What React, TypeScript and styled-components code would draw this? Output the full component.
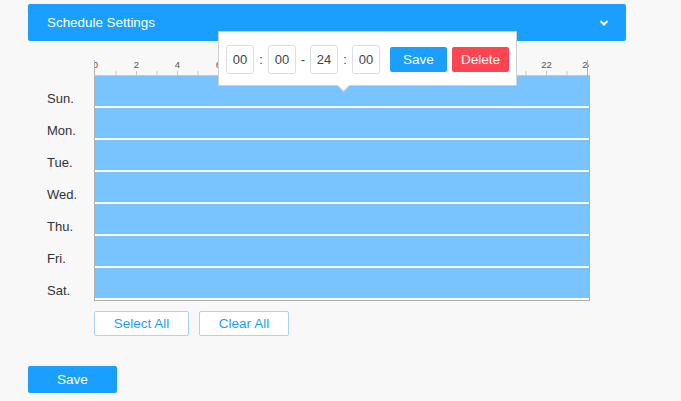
import React from "react";
import styled, { createGlobalStyle } from "styled-components";

const GlobalStyle = createGlobalStyle`
  html, body { margin: 0; padding: 0; background: #f8f8f8; }
  body { font-family: "Liberation Sans", Arial, sans-serif; }
`;

const Page = styled.div`
  position: relative;
  width: 681px;
  height: 401px;
  box-sizing: border-box;
  padding: 4px 0 0 28px;
`;

const Header = styled.div`
  width: 598px;
  height: 37px;
  box-sizing: border-box;
  background: #1a9fff;
  border-radius: 2px;
  display: flex;
  align-items: center;
  justify-content: space-between;
  padding: 0 17px 0 19px;
  color: #fff;
  font-size: 13.4px;
`;

const Timeline = styled.div`
  display: flex;
  align-items: flex-start;
`;

const LabelCol = styled.div`
  width: 66px;
  box-sizing: border-box;
  padding: 35px 0 0 19px;
  display: flex;
  flex-direction: column;
`;

const DayLabel = styled.div`
  height: 32px;
  box-sizing: border-box;
  padding-top: 14px;
  line-height: 18px;
  font-size: 13px;
  color: #333;
`;

const GridCol = styled.div`
  width: 496px;
  display: flex;
  flex-direction: column;
`;

const DayGrid = styled.div`
  display: flex;
  flex-direction: column;
  gap: 2px;
  padding-bottom: 2px;
  background: #fff;
  border: 1px solid #b0b0b0;
  border-top: none;
`;

const DayRow = styled.div`
  height: 30px;
  background: #79c3ff;
`;

const Actions = styled.div`
  display: flex;
  gap: 10px;
  margin: 10px 0 0 66px;
`;

const OutlineButton = styled.button<{ $w: number }>`
  width: ${(p) => p.$w}px;
  height: 25px;
  background: #fff;
  border: 1px solid #a6d4ff;
  border-radius: 2px;
  color: #1a9fff;
  font-family: "Liberation Sans", Arial, sans-serif;
  font-size: 13.5px;
  padding: 0;
`;

const SolidButton = styled.button<{ $w: number; $h: number; $red?: boolean }>`
  width: ${(p) => p.$w}px;
  height: ${(p) => p.$h}px;
  background: ${(p) => (p.$red ? "#ff4552" : "#1a9fff")};
  border: none;
  border-radius: 2px;
  color: #fff;
  font-family: "Liberation Sans", Arial, sans-serif;
  font-size: 13.5px;
  padding: 0;
`;

const SaveRow = styled.div`
  margin-top: 30px;
`;

const Popover = styled.div`
  position: absolute;
  left: 218px;
  top: 31px;
  width: 299px;
  height: 55px;
  box-sizing: border-box;
  background: #fff;
  border: 1px solid #d0d0d0;
  display: flex;
  align-items: center;
  padding: 1px 0 0 7px;
  font-size: 13px;
  color: #333;

  &::after {
    content: "";
    position: absolute;
    left: 120px;
    bottom: -5px;
    width: 8px;
    height: 8px;
    background: #fff;
    border-right: 1px solid #d0d0d0;
    border-bottom: 1px solid #d0d0d0;
    transform: rotate(45deg);
  }
`;

const TimeBox = styled.div`
  width: 28px;
  height: 29px;
  box-sizing: border-box;
  border: 1px solid #dcdfe6;
  border-radius: 3px;
  display: flex;
  align-items: center;
  justify-content: center;
  font-size: 13px;
  color: #444;
`;

const Sep = styled.span`
  width: 14px;
  text-align: center;
  color: #444;
`;

const PopButtons = styled.div`
  display: flex;
  gap: 5px;
  margin-left: 10px;
`;

const Chevron = () => (
  <svg width="10" height="6" viewBox="0 0 10 6">
    <polyline points="1.5,1 5,4.5 8.5,1" fill="none" stroke="#fff" strokeWidth="2" />
  </svg>
);

const Ruler = () => {
  const step = 20.5;
  const x0 = 1;
  const ticks = Array.from({ length: 25 }, (_, i) => i);
  return (
    <svg width="496" height="35" viewBox="0 0 496 35" style={{ display: "block" }}>
      <defs>
        <clipPath id="rc">
          <rect x="1" y="0" width="494" height="35" />
        </clipPath>
      </defs>
      <line x1="0.5" y1="19" x2="0.5" y2="35" stroke="#b0b0b0" />
      <line x1="0" y1="34.5" x2="496" y2="34.5" stroke="#c8c8c8" />
      <line x1="493.5" y1="19" x2="493.5" y2="35" stroke="#b0b0b0" />
      {ticks.slice(1, 24).map((i) => (
        <line
          key={i}
          x1={x0 + i * step + 0.5}
          y1="30"
          x2={x0 + i * step + 0.5}
          y2="34"
          stroke="#c8c8c8"
        />
      ))}
      <g clipPath="url(#rc)">
        {ticks
          .filter((i) => i % 2 === 0)
          .map((i) => (
            <text
              key={i}
              x={x0 + i * step + 0.5}
              y="27"
              fontSize="9.5"
              fill="#555"
              textAnchor="middle"
              fontFamily="Liberation Sans, Arial, sans-serif"
            >
              {i}
            </text>
          ))}
      </g>
    </svg>
  );
};

const days = ["Sun.", "Mon.", "Tue.", "Wed.", "Thu.", "Fri.", "Sat."];

export default function App() {
  return (
    <>
      <GlobalStyle />
      <Page>
        <Header>
          <span>Schedule Settings</span>
          <Chevron />
        </Header>
        <Timeline>
          <LabelCol>
            {days.map((d) => (
              <DayLabel key={d}>{d}</DayLabel>
            ))}
          </LabelCol>
          <GridCol>
            <Ruler />
            <DayGrid>
              {days.map((d) => (
                <DayRow key={d} />
              ))}
            </DayGrid>
          </GridCol>
        </Timeline>
        <Actions>
          <OutlineButton $w={95}>Select All</OutlineButton>
          <OutlineButton $w={90}>Clear All</OutlineButton>
        </Actions>
        <SaveRow>
          <SolidButton $w={89} $h={27}>Save</SolidButton>
        </SaveRow>
        <Popover>
          <TimeBox>00</TimeBox>
          <Sep>:</Sep>
          <TimeBox>00</TimeBox>
          <Sep>-</Sep>
          <TimeBox>24</TimeBox>
          <Sep>:</Sep>
          <TimeBox>00</TimeBox>
          <PopButtons>
            <SolidButton $w={57} $h={25}>Save</SolidButton>
            <SolidButton $w={57} $h={25} $red>
              Delete
            </SolidButton>
          </PopButtons>
        </Popover>
      </Page>
    </>
  );
}
